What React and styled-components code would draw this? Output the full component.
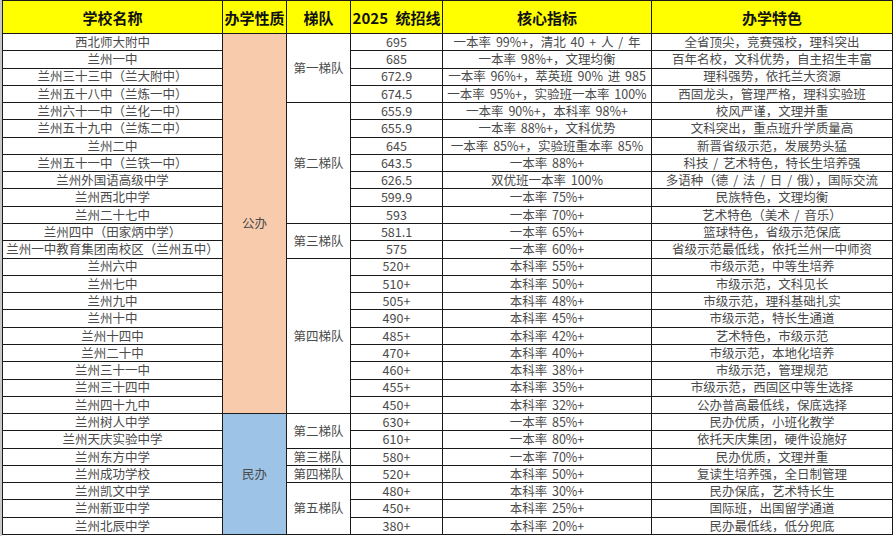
import React from 'react'
import styled, { createGlobalStyle } from 'styled-components'

const GlobalStyle = createGlobalStyle`
  html, body {
    margin: 0;
    padding: 0;
    background: #fff;
  }
  body {
    font-family: "Noto Sans CJK SC", "Liberation Sans", sans-serif;
  }
`

const Page = styled.div`
  width: 894px;
  height: 536px;
  box-sizing: border-box;
  border-left: 2px solid #c9c9c9;
  overflow: hidden;
`

const Sheet = styled.div`
  display: grid;
  grid-template-columns: 219px 63px 63px 91px 208px 240px;
  grid-template-rows: 32px repeat(29, 1fr);
  gap: 1px;
  width: 891px;
  height: 535px;
  box-sizing: border-box;
  background: #1a1a1a;
  border: 1px solid #1a1a1a;
`

const HeadCell = styled.div`
  display: flex;
  align-items: center;
  justify-content: center;
  background: #ffff00;
  color: #111;
  font-size: 15px;
  font-weight: 700;
  word-spacing: 4px;
  white-space: nowrap;
`

const Cell = styled.div`
  display: flex;
  align-items: center;
  justify-content: center;
  background: ${p => p.$bg || '#fff'};
  color: #4a4a4a;
  font-size: 12.5px;
  line-height: 1;
  word-spacing: 2px;
  white-space: nowrap;
  grid-row: ${p => (p.$span ? `span ${p.$span}` : 'auto')};
`

const headers = ['学校名称', '办学性质', '梯队', '2025 统招线', '核心指标', '办学特色']

const rows = [
  ['西北师大附中', '695', '一本率 99%+，清北 40 + 人 / 年', '全省顶尖，竞赛强校，理科突出'],
  ['兰州一中', '685', '一本率 98%+，文理均衡', '百年名校，文科优势，自主招生丰富'],
  ['兰州三十三中（兰大附中）', '672.9', '一本率 96%+，萃英班 90% 进 985', '理科强势，依托兰大资源'],
  ['兰州五十八中（兰炼一中）', '674.5', '一本率 95%+，实验班一本率 100%', '西固龙头，管理严格，理科实验班'],
  ['兰州六十一中（兰化一中）', '655.9', '一本率 90%+，本科率 98%+', '校风严谨，文理并重'],
  ['兰州五十九中（兰炼二中）', '655.9', '一本率 88%+，文科优势', '文科突出，重点班升学质量高'],
  ['兰州二中', '645', '一本率 85%+，实验班重本率 85%', '新晋省级示范，发展势头猛'],
  ['兰州五十一中（兰铁一中）', '643.5', '一本率 88%+', '科技 / 艺术特色，特长生培养强'],
  ['兰州外国语高级中学', '626.5', '双优班一本率 100%', '多语种（德 / 法 / 日 / 俄），国际交流'],
  ['兰州西北中学', '599.9', '一本率 75%+', '民族特色，文理均衡'],
  ['兰州二十七中', '593', '一本率 70%+', '艺术特色（美术 / 音乐）'],
  ['兰州四中（田家炳中学）', '581.1', '一本率 65%+', '篮球特色，省级示范保底'],
  ['兰州一中教育集团南校区（兰州五中）', '575', '一本率 60%+', '省级示范最低线，依托兰州一中师资'],
  ['兰州六中', '520+', '本科率 55%+', '市级示范，中等生培养'],
  ['兰州七中', '510+', '本科率 50%+', '市级示范，文科见长'],
  ['兰州九中', '505+', '本科率 48%+', '市级示范，理科基础扎实'],
  ['兰州十中', '490+', '本科率 45%+', '市级示范，特长生通道'],
  ['兰州十四中', '485+', '本科率 42%+', '艺术特色，市级示范'],
  ['兰州二十中', '470+', '本科率 40%+', '市级示范，本地化培养'],
  ['兰州三十一中', '460+', '本科率 38%+', '市级示范，管理规范'],
  ['兰州三十四中', '455+', '本科率 35%+', '市级示范，西固区中等生选择'],
  ['兰州四十九中', '450+', '本科率 32%+', '公办普高最低线，保底选择'],
  ['兰州树人中学', '630+', '一本率 85%+', '民办优质，小班化教学'],
  ['兰州天庆实验中学', '610+', '一本率 80%+', '依托天庆集团，硬件设施好'],
  ['兰州东方中学', '580+', '一本率 70%+', '民办优质，文理并重'],
  ['兰州成功学校', '520+', '本科率 50%+', '复读生培养强，全日制管理'],
  ['兰州凯文中学', '480+', '本科率 30%+', '民办保底，艺术特长生'],
  ['兰州新亚中学', '450+', '本科率 25%+', '国际班，出国留学通道'],
  ['兰州北辰中学', '380+', '本科率 20%+', '民办最低线，低分兜底'],
]

// merged cells: start row -> [label, span, colour]
const types = {
  0: ['公办', 22, '#f8cbad'],
  22: ['民办', 7, '#9dc3e6'],
}

const tiers = {
  0: ['第一梯队', 4],
  4: ['第二梯队', 7],
  11: ['第三梯队', 2],
  13: ['第四梯队', 9],
  22: ['第二梯队', 2],
  24: ['第三梯队', 1],
  25: ['第四梯队', 1],
  26: ['第五梯队', 3],
}

export default function App() {
  const cells = []
  rows.forEach(([name, score, metric, feature], i) => {
    cells.push(<Cell key={`n${i}`}>{name}</Cell>)
    if (types[i]) {
      const [label, span, bg] = types[i]
      cells.push(
        <Cell key={`t${i}`} $span={span} $bg={bg}>
          {label}
        </Cell>
      )
    }
    if (tiers[i]) {
      const [label, span] = tiers[i]
      cells.push(
        <Cell key={`g${i}`} $span={span}>
          {label}
        </Cell>
      )
    }
    cells.push(<Cell key={`s${i}`}>{score}</Cell>)
    cells.push(<Cell key={`m${i}`}>{metric}</Cell>)
    cells.push(<Cell key={`f${i}`}>{feature}</Cell>)
  })

  return (
    <Page>
      <GlobalStyle />
      <Sheet>
        {headers.map(h => (
          <HeadCell key={h}>{h}</HeadCell>
        ))}
        {cells}
      </Sheet>
    </Page>
  )
}
